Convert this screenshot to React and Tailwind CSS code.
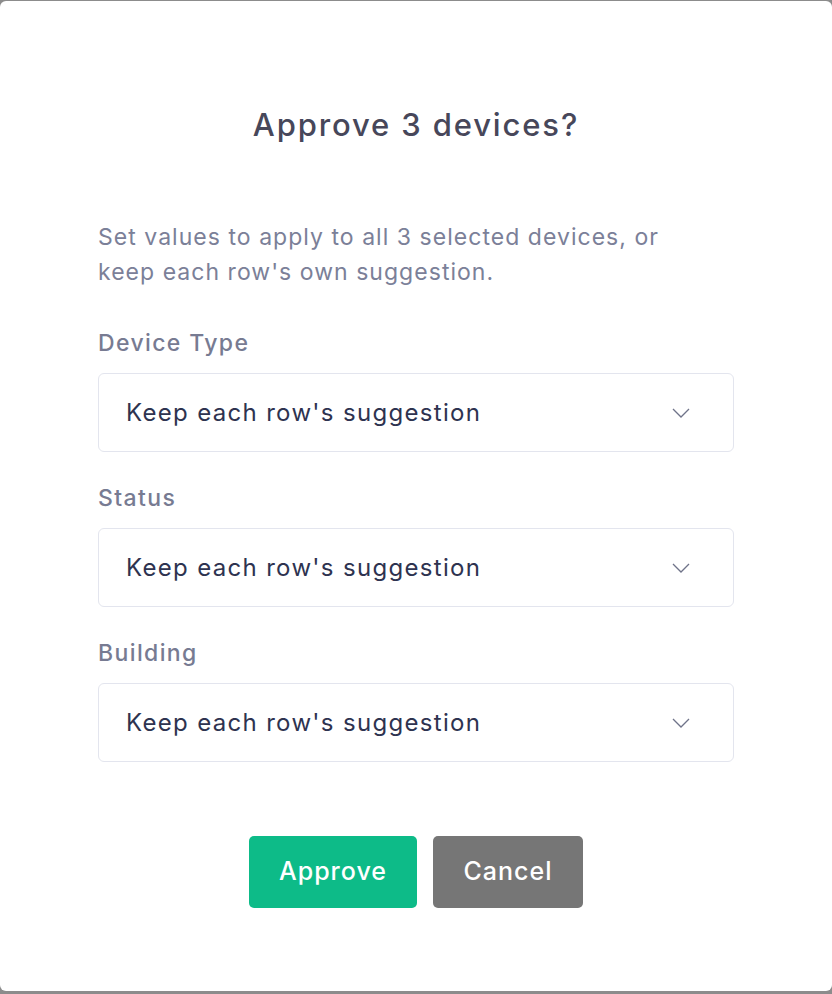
import React, { useState } from 'react';

function Chevron() {
  return (
    <svg width="20" height="12" viewBox="0 0 20 12" fill="none" className="shrink-0">
      <path d="M2 2l8 8 8-8" stroke="#6f7389" strokeWidth="1.3" />
    </svg>
  );
}

function Field({ label, value }) {
  return (
    <div className="flex flex-col">
      <label className="text-[23px] leading-[32px] font-medium tracking-[0.06em] text-[#777b92]">{label}</label>
      <div className="mt-[14px] h-[79px] flex items-center justify-between pl-[27px] pr-[42px] border border-[#e3e5ee] rounded-[6px] bg-white">
        <span className="text-[24px] tracking-[0.055em] text-[#2e3350]">{value}</span>
        <Chevron />
      </div>
    </div>
  );
}

function App() {
  const [deviceType] = useState("Keep each row's suggestion");
  const [status] = useState("Keep each row's suggestion");
  const [building] = useState("Keep each row's suggestion");

  return (
    <div className="w-[832px] h-[994px] bg-[#8c8c8c] overflow-hidden" style={{ fontFamily: 'Inter, "Noto Sans", sans-serif' }}>
      <div className="mt-px h-[990px] bg-white rounded-[6px] px-[98px] pt-[104px] flex flex-col">
        <h2 className="text-center text-[31px] leading-[40px] font-medium tracking-[0.06em] text-[#47475a]">Approve 3 devices?</h2>

        <p className="mt-[75px] max-w-[610px] text-[23px] leading-[35px] tracking-[0.045em] text-[#7b8098]">
          Set values to apply to all 3 selected devices, or keep each row's own suggestion.
        </p>

        <div className="mt-[37px] flex flex-col gap-[30px]">
          <Field label="Device Type" value={deviceType} />
          <Field label="Status" value={status} />
          <Field label="Building" value={building} />
        </div>

        <div className="mt-[74px] flex justify-center gap-4">
          <button className="w-[168px] h-[72px] rounded-[5px] bg-[#0dbb88] text-white text-[25px] tracking-[0.04em] font-medium">Approve</button>
          <button className="w-[150px] h-[72px] rounded-[5px] bg-[#767676] text-white text-[25px] tracking-[0.04em] font-medium">Cancel</button>
        </div>
      </div>
    </div>
  );
}

export default App;
